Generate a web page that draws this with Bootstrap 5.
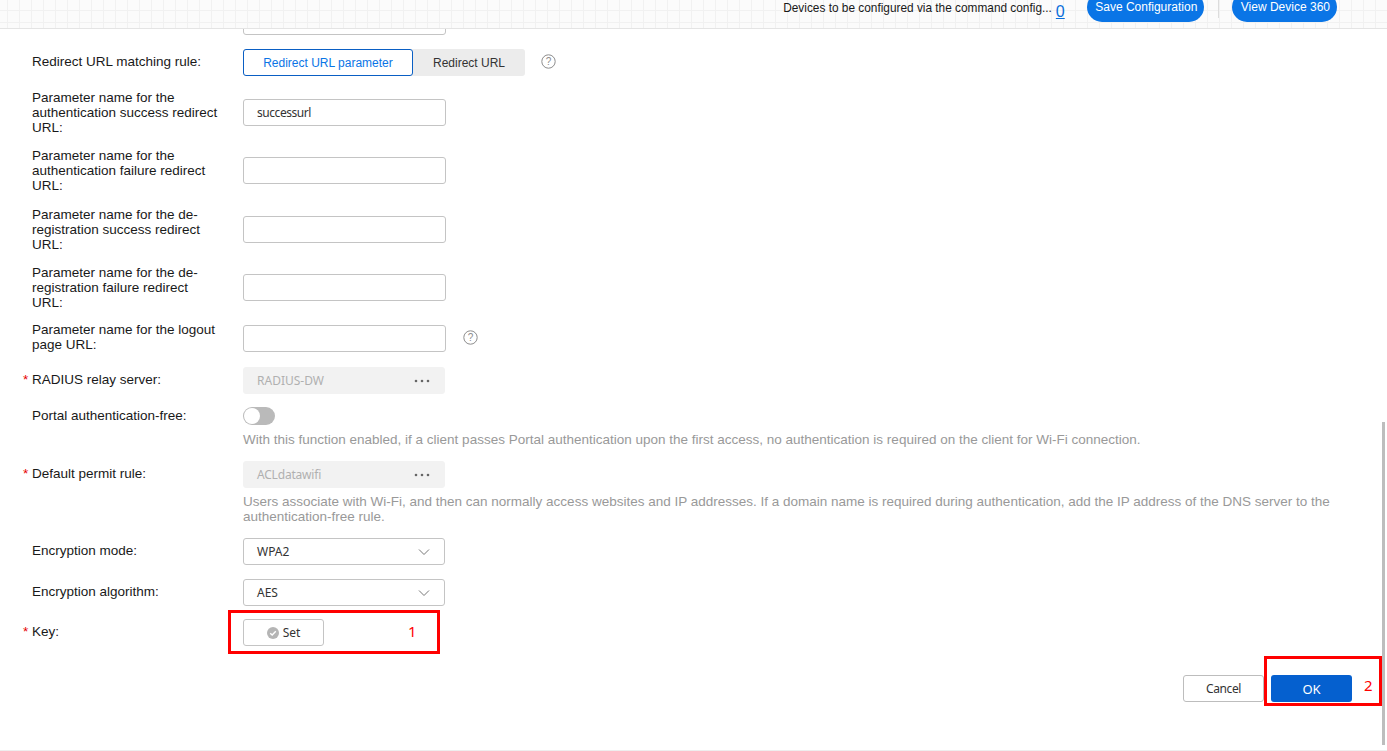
<!DOCTYPE html>
<html lang="en">
<head>
<meta charset="utf-8">
<title>Portal configuration</title>
<link href="https://cdn.jsdelivr.net/npm/bootstrap@5.3.0/dist/css/bootstrap.min.css" rel="stylesheet">
<style>
html,body{height:751px;overflow:hidden;background:#fff}
body{font-family:"Liberation Sans",Arial,sans-serif;font-size:13.5px;line-height:15px;color:#191919;position:relative}
.topstrip{height:29px;border-bottom:1px solid #e4e4e4;overflow:hidden;
 background-color:#fbfbfb;
 background-image:linear-gradient(#f1f1f1 1px,transparent 1px),linear-gradient(90deg,#f1f1f1 1px,transparent 1px);
 background-size:12px 12px;background-position:7px 10px;padding-right:50px}
.pillbtn{background:#0a75e6;color:#fff;border:0;border-radius:15px;font-size:12px;line-height:15px;height:30px;padding:0 7px 0 8.5px;margin-top:-8px;display:flex;align-items:center;font-family:"Liberation Sans",sans-serif}
.toptext{font-size:11.85px;color:#191919;margin-top:1px}
.zerolink{font-size:16px;color:#0a6fdc;margin-left:4px;margin-right:22px;text-decoration:underline;line-height:19px;margin-top:2px}
.vsep{width:1px;height:18px;background:#dcdcdc;margin:0 13px 0 14px}
.formarea{height:721px;overflow:hidden;position:relative}
.frm{padding-left:32px;margin-top:-21px}
.frow{display:flex;position:relative}
.lab{width:211px;flex:none;padding-right:23px;margin:-1px 0 1px}
.req::before{content:"*";color:#e60000;position:absolute;left:-9px;top:5px}
.ctl{width:203px;height:27px;border:1px solid #c4c4c4;border-radius:3px;font:12px "Noto Sans",sans-serif;color:#333;padding:0 13px;display:flex;align-items:center;justify-content:space-between;background:#fff;flex:none}
.ctl.slim{width:202px}
.ctl.off{background:#f2f2f2;border-color:#f2f2f2;color:#b0b0b0;width:202px}
.ctl svg{margin-right:1px}
.tight{letter-spacing:-.45px}
.tighter{letter-spacing:-.2px}
.seg{display:flex;width:282px;height:27px;background:#ececec;border-radius:3px;font:12px "Liberation Sans",sans-serif}
.seg-on{width:170px;background:#fff;border:1px solid #0a5fc4;border-radius:3px;color:#0a75e6;display:flex;align-items:center;justify-content:center}
.seg-off{flex:1;display:flex;align-items:center;justify-content:center;color:#333}
.qmark{width:15px;height:15px;flex:none}
.switchy{width:32px;height:18px;border-radius:9px;background:#bababa;position:relative}
.switchy::after{content:"";position:absolute;left:1px;top:1px;width:16px;height:16px;border-radius:50%;background:#fff}
.hintline{color:#999;font-size:13.5px;line-height:15px;margin-left:211px;width:1110px}
.setbtn{width:81px;height:27px;border:1px solid #c4c4c4;border-radius:3px;background:#fff;font:12px "Noto Sans",sans-serif;color:#333;padding:0;display:flex;align-items:center;justify-content:center;gap:4px}
.actionbar{padding-right:35px;margin-top:29px}
.actbtn{width:81px;height:27px;border-radius:3px;font:12px "Noto Sans",sans-serif;padding:0;display:flex;align-items:center;justify-content:center}
.cancelb{border:1px solid #bdbdbd;background:#fff;color:#333;margin-right:7px;letter-spacing:-.4px}
.okb{border:0;background:#0560cf;color:#fff;font-size:13px}
.redbox{position:absolute;border:3px solid #f00;pointer-events:none}
.rednum{position:absolute;color:#f00;font:15px "Noto Sans",sans-serif;line-height:20px}
.sbar{position:absolute;left:1382px;top:422px;width:3px;height:323px;background:#bdbdbd}
.footline{position:absolute;left:0;right:0;top:750px;height:1px;background:#eeeeee}
</style>
</head>
<body>
<div class="topstrip d-flex justify-content-end align-items-start">
  <span class="toptext">Devices to be configured via the command config...</span>
  <a class="zerolink" href="#">0</a>
  <button class="pillbtn" type="button">Save Configuration</button>
  <span class="vsep"></span>
  <button class="pillbtn" type="button">View Device 360</button>
</div>
<div class="formarea">
<form class="frm">
  <div class="frow align-items-center"><div class="lab">Redirect parameter:</div><div class="ctl">/</div></div>
  <div class="frow align-items-center" style="margin-top:14px">
    <div class="lab">Redirect URL matching rule:</div>
    <div class="seg"><div class="seg-on">Redirect URL parameter</div><div class="seg-off">Redirect URL</div></div>
    <svg class="qmark ms-3" style="margin-bottom:3px" viewBox="0 0 15 15"><circle cx="7.5" cy="7.5" r="6.7" fill="none" stroke="#8c8c8c"/><text x="7.5" y="11" font-size="10" text-anchor="middle" fill="#8c8c8c" font-family="Liberation Sans">?</text></svg>
  </div>
  <div class="frow" style="margin-top:15px"><div class="lab">Parameter name for the authentication success redirect URL:</div><div class="ctl tight" style="margin-top:8px">successurl</div></div>
  <div class="frow" style="margin-top:13px"><div class="lab">Parameter name for the authentication failure redirect URL:</div><div class="ctl" style="margin-top:8px"></div></div>
  <div class="frow" style="margin-top:14px"><div class="lab">Parameter name for the de-registration success redirect URL:</div><div class="ctl" style="margin-top:8px"></div></div>
  <div class="frow" style="margin-top:13px"><div class="lab">Parameter name for the de-registration failure redirect URL:</div><div class="ctl" style="margin-top:8px"></div></div>
  <div class="frow align-items-center" style="margin-top:12px"><div class="lab">Parameter name for the logout page URL:</div><div class="ctl"></div>
    <svg class="qmark" style="margin-left:17px;margin-bottom:2px" viewBox="0 0 15 15"><circle cx="7.5" cy="7.5" r="6.7" fill="none" stroke="#8c8c8c"/><text x="7.5" y="11" font-size="10" text-anchor="middle" fill="#8c8c8c" font-family="Liberation Sans">?</text></svg></div>
  <div class="frow align-items-center" style="margin-top:14px"><div class="lab req">RADIUS relay server:</div><div class="ctl off">RADIUS-DW<svg width="16" height="4" viewBox="0 0 16 4"><circle cx="2" cy="2" r="1.3" fill="#666"/><circle cx="8" cy="2" r="1.3" fill="#666"/><circle cx="14" cy="2" r="1.3" fill="#666"/></svg></div></div>
  <div class="frow align-items-center" style="margin-top:13px"><div class="lab">Portal authentication-free:</div><div class="switchy"></div></div>
  <div class="hintline" style="margin-top:7px">With this function enabled, if a client passes Portal authentication upon the first access, no authentication is required on the client for Wi-Fi connection.</div>
  <div class="frow align-items-center" style="margin-top:14px"><div class="lab req">Default permit rule:</div><div class="ctl off"><span class="tighter">ACLdatawifi</span><svg width="16" height="4" viewBox="0 0 16 4"><circle cx="2" cy="2" r="1.3" fill="#666"/><circle cx="8" cy="2" r="1.3" fill="#666"/><circle cx="14" cy="2" r="1.3" fill="#666"/></svg></div></div>
  <div class="hintline" style="margin-top:6px">Users associate with Wi-Fi, and then can normally access websites and IP addresses. If a domain name is required during authentication, add the IP address of the DNS server to the authentication-free rule.</div>
  <div class="frow align-items-center" style="margin-top:14px"><div class="lab">Encryption mode:</div><div class="ctl slim">WPA2<svg width="12" height="8" viewBox="0 0 12 8"><path d="M1 1.5 6 6.5 11 1.5" fill="none" stroke="#777"/></svg></div></div>
  <div class="frow align-items-center" style="margin-top:14px"><div class="lab">Encryption algorithm:</div><div class="ctl slim">AES<svg width="12" height="8" viewBox="0 0 12 8"><path d="M1 1.5 6 6.5 11 1.5" fill="none" stroke="#777"/></svg></div></div>
  <div class="frow align-items-center" style="margin-top:13px"><div class="lab req">Key:</div><button type="button" class="setbtn"><svg width="12" height="12" viewBox="0 0 12 12"><circle cx="6" cy="6" r="6" fill="#b5b5b5"/><path d="M3.2 6.2 5.2 8 8.8 4.2" fill="none" stroke="#fff" stroke-width="1.4"/></svg>Set</button></div>
</form>
<div class="actionbar d-flex justify-content-end">
  <button type="button" class="actbtn cancelb">Cancel</button>
  <button type="button" class="actbtn okb">OK</button>
</div>
</div>
<div class="redbox" style="left:228px;top:610px;width:212px;height:44px"></div>
<span class="rednum" style="left:408px;top:621px">1</span>
<div class="redbox" style="left:1264px;top:656px;width:118px;height:50px"></div>
<span class="rednum" style="left:1364px;top:675px">2</span>
<div class="sbar"></div>
<div class="footline"></div>
<script src="https://cdn.jsdelivr.net/npm/bootstrap@5.3.0/dist/js/bootstrap.bundle.min.js"></script>
</body>
</html>
